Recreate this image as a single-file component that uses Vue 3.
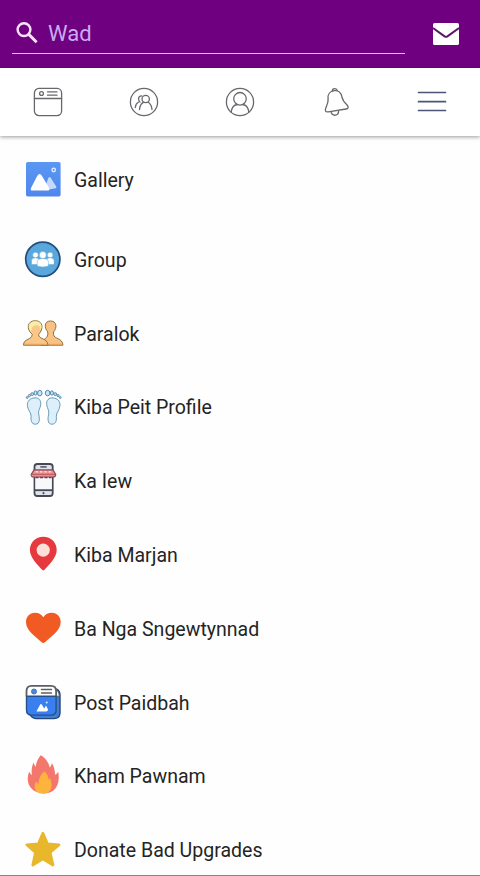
<script setup>
import { ref } from 'vue'

const query = ref('Wad')

const items = [
  { id: 'gallery', label: 'Gallery' },
  { id: 'group', label: 'Group' },
  { id: 'friends', label: 'Paralok' },
  { id: 'visits', label: 'Kiba Peit Profile' },
  { id: 'market', label: 'Ka Iew' },
  { id: 'nearby', label: 'Kiba Marjan' },
  { id: 'liked', label: 'Ba Nga Sngewtynnad' },
  { id: 'posts', label: 'Post Paidbah' },
  { id: 'popular', label: 'Kham Pawnam' },
  { id: 'donate', label: 'Donate Bad Upgrades' }
]
</script>

<template>
  <div class="screen">
    <header class="header">
      <div class="search">
        <svg class="search-icon" viewBox="0 0 22 22">
          <circle cx="8" cy="7.6" r="6.4" fill="none" stroke="#fbe3fb" stroke-width="2.4" />
          <path d="M12.8 12.4L20.6 20.2" stroke="#fbe3fb" stroke-width="2.9" />
        </svg>
        <span class="query">{{ query }}</span>
      </div>
      <svg class="mail" viewBox="0 0 26 22">
        <rect width="26" height="22" rx="1.6" fill="#fff" />
        <path d="M0 5L11.6 13.4Q13 14.3 14.4 13.4L26 5" fill="none" stroke="#5d1768" stroke-width="2" />
      </svg>
    </header>

    <nav class="tabs">
      <div class="tab">
        <svg viewBox="0 0 30 30">
          <rect x="1.4" y="1.4" width="27.2" height="27.2" rx="4.5" />
          <path d="M1.4 11.5H28.6M14.5 4.8H24M14.5 8.2H24" />
          <circle cx="8.5" cy="6.5" r="1.9" />
        </svg>
      </div>
      <div class="tab">
        <svg viewBox="0 0 30 30">
          <circle cx="15" cy="15" r="13.6" />
          <circle cx="16.7" cy="12" r="3.7" />
          <path d="M12.8 8.9Q9.4 9 9.6 12.2Q9.7 14 11 15M9.3 15.3Q6.7 16.7 6.3 20.5M14.4 15.4Q11.2 16.8 10.5 22.5M19.3 15.2Q22.6 17.5 23 22.5" />
        </svg>
      </div>
      <div class="tab">
        <svg viewBox="0 0 30 30">
          <circle cx="15" cy="15" r="13.6" />
          <circle cx="15" cy="11.8" r="6.3" />
          <path d="M6.2 25.3Q7 18.2 12.2 17.5M17.8 17.5Q23 18.2 23.8 25.3" />
        </svg>
      </div>
      <div class="tab">
        <svg viewBox="0 0 30 30">
          <path d="M11.3 3.9Q11.4 1.8 13.6 1.6Q15.9 1.5 16.3 3.7M10.2 25.4Q11.2 28.6 14.4 28.2Q17.5 27.6 17.6 24.5" />
          <path d="M13.2 3.6C17.3 3.1 20.2 5.8 20.9 9.8C21.7 13.8 23.5 15.6 26.1 18C28 20.1 27.2 21.7 25 22L7.3 24.8C4.7 25.3 3.7 23.6 4.8 20.9C6.3 17.5 7.6 15.5 7.1 11.5C6.6 7.5 8.9 4.2 13.2 3.6Z" />
        </svg>
      </div>
      <div class="tab">
        <svg class="menu" viewBox="0 0 30 30">
          <path d="M1.5 5.5H28.5M1.5 14.7H28.5M1.5 23.5H28.5" />
        </svg>
      </div>
    </nav>

    <main class="list">
      <div v-for="item in items" :key="item.id" class="row" :class="item.id">
        <svg class="icon" viewBox="0 0 40 40">
          <template v-if="item.id === 'gallery'">
            <defs>
              <linearGradient id="sky" x1="0" y1="0" x2="0" y2="1">
                <stop offset="0" stop-color="#5a98f2" />
                <stop offset="1" stop-color="#4f86ee" />
              </linearGradient>
            </defs>
            <rect x="3" y="2" width="34.6" height="34.6" rx="1.8" fill="url(#sky)" />
            <path d="M21 30.3L25.2 18.3Q26.6 16 28 18.2L33.2 26.5Q34 28.3 31.6 28.5Z" fill="#c5dafb" />
            <path d="M8 28L14.2 16Q16.7 12.1 19 16L26.3 28.3Q27 30.6 24.5 30.6H9.5Q7 30.6 8 28Z" fill="#fff" />
            <circle cx="30.7" cy="10" r="1.7" fill="#5a94f0" stroke="#d9e9ff" stroke-width="1.5" />
          </template>

          <template v-else-if="item.id === 'group'">
            <circle cx="19.8" cy="19.2" r="17.1" fill="#5aa7dc" stroke="#204f80" stroke-width="1.7" />
            <g fill="#fff" stroke="#5aa7dc" stroke-width=".5">
              <circle cx="12.5" cy="15" r="2.8" />
              <circle cx="27.1" cy="15" r="2.8" />
              <path d="M8.5 24.5V20.5Q8.7 17.7 12.5 17.7Q16 17.7 16.2 20.5V24.5ZM23.4 24.5V20.5Q23.6 17.7 27.1 17.7Q30.9 17.7 31.1 20.5V24.5Z" />
              <circle cx="19.8" cy="15" r="3.5" />
              <path d="M14.2 26V21.5Q14.5 18.5 19.8 18.5Q25.1 18.5 25.4 21.5V26Q19.8 28.2 14.2 26Z" />
            </g>
          </template>

          <g v-else-if="item.id === 'friends'" stroke="#8f7040" stroke-width="1" stroke-linejoin="round">
            <path d="M24.8 20.5V18C21.2 14 21 7 27.5 7C34 7 34.2 14 30.5 18V20.5C31 25.3 39.5 23.5 40 31.2H18C17.5 25.5 24.3 25.5 24.8 20.5Z" fill="#f8c382" />
            <path d="M9.2 20.3C3 15 4.2 6.7 12.3 6.7C20 6.7 21 15 15.6 20.3C15.8 26 24.5 23.5 25 31.2H.5C.5 24 9 26.5 9.2 20.3Z" fill="#fac788" />
            <path d="M8.2 18.2C3.8 13.5 5.6 7.5 12.3 7.3C18 7.3 20.2 12 17.3 16.5C17.2 12.5 16 10.8 13.5 11.2C10 11.5 8.4 13 8.2 18.2Z" fill="#faeea6" stroke="none" />
            <path d="M1 30.3H24.2M26 30.3H39.4" stroke="#e9a458" stroke-width="1.1" />
          </g>

          <g v-else-if="item.id === 'visits'" fill="#dceffb" stroke="#5d8fae" stroke-width=".9">
            <g v-for="side in [1, -1]" :key="side" :transform="side === 1 ? 'translate(0 .2)' : 'translate(41.4 .2) scale(-1 1)'">
              <path d="M11.3 9.7C15.7 9.2 18.2 12 17.7 16.5C17.3 20.5 14.7 22 15.8 26.5C16.7 30.3 17 35.8 12.6 36C8.2 36.2 7.7 31.5 8.1 28.5C8.5 24.5 4.6 22 4.4 17.2C4.2 12.8 7 10.1 11.3 9.7Z" />
              <g fill="#c4e4f7" stroke="#477fa4" stroke-width=".9">
                <ellipse cx="16.8" cy="4.9" rx="2.3" ry="2.8" />
                <ellipse cx="12.5" cy="4.8" rx="1.5" ry="2.2" />
                <circle cx="9.2" cy="5.9" r="1.4" />
                <circle cx="6.4" cy="7.4" r="1.1" />
                <circle cx="4.2" cy="9.3" r=".9" />
              </g>
            </g>
          </g>

          <g v-else-if="item.id === 'market'" stroke="#464855" stroke-width="1.8" stroke-linejoin="round">
            <rect x="11.5" y="3" width="18.2" height="32" rx="2.8" fill="#dfe3e9" />
            <path d="M12.4 16H28.8V28.5H12.4Z" fill="#f7f8fa" stroke="none" />
            <path d="M11.6 29.2H29.6" />
            <path d="M17.3 5.9H23.7" stroke-width="1.4" />
            <path d="M11 8.9H30L32.8 13.6Q32.4 16.2 29.7 16L10.8 16Q8.2 16.2 8.1 13.6Z" fill="#ef8f92" stroke="#7c4a58" stroke-width="1.1" />
            <path d="M12.8 10.8H28.5" stroke="#f8dede" stroke-width="1.6" stroke-dasharray="2 2.3" />
            <path d="M9 13.3H32" stroke="#b8505c" stroke-width="1" />
            <path d="M12.5 16.6H28.5" stroke="#6b3f50" stroke-width="1.3" stroke-dasharray="3 1.5" />
            <circle cx="20.5" cy="32.1" r=".7" fill="#464855" stroke-width="1" />
          </g>

          <template v-else-if="item.id === 'nearby'">
            <path d="M20.3 1.8C28 1.8 33.7 7.5 33.7 15C33.7 22.7 25.5 30.5 21.2 35.1Q20.3 35.9 19.4 35.1C15.1 30.5 6.9 22.7 6.9 15C6.9 7.5 12.6 1.8 20.3 1.8Z" fill="#e5393f" />
            <circle cx="20.2" cy="15.1" r="6.6" fill="#fce0d8" />
          </template>

          <path v-else-if="item.id === 'liked'" d="M20.3 8.3C22.3 5 25.3 3.7 28.7 3.7C34.3 3.7 37.8 8 37.7 13.3C37.5 22 27.5 27.8 22 33.3Q20.3 34.8 18.6 33.3C13.1 27.8 3.1 22 3 13.3C2.9 8 6.4 3.7 12 3.7C15.4 3.7 18.3 5 20.3 8.3Z" fill="#f15a22" />

          <template v-else-if="item.id === 'posts'">
            <path d="M30 5L34 6.3Q37 8 37 12V30Q36.7 35.6 31 35.6H13Q8.5 35.3 6.8 31Z" fill="#3f7ed5" stroke="#23477c" stroke-width="1.4" />
            <path d="M32 6.2Q36.3 8 36.3 13.3H32Z" fill="#f5f5f5" stroke="#5b5f66" />
            <rect x="3.5" y="2.8" width="29.6" height="29.3" rx="5" fill="#fff" />
            <path d="M3.5 13.3H33.1V27Q33.1 32.1 28 32.1H8.5Q3.5 32.1 3.5 27Z" fill="#397ff0" stroke="#284f87" stroke-width="1.4" />
            <path d="M3.5 13.3V8Q3.5 2.8 8.5 2.8H28Q33.1 2.8 33.1 8V13.3" fill="none" stroke="#5b5f66" stroke-width="1.8" />
            <circle cx="11" cy="8.5" r="2.5" fill="#4d87d7" stroke="#397ac3" />
            <path d="M18.5 6.6H28.5M18.5 10H28.5" stroke="#5b5f66" stroke-width="1.5" stroke-linecap="round" />
            <path d="M13.4 28.6L17.2 21.5Q18 20.7 18.8 21.5L21.2 25.4L23 22.5L25 26.6Q25 28.4 23 28.6Z" fill="#fff" />
            <circle cx="23.7" cy="19.5" r="1" fill="#dceaff" />
          </template>

          <template v-else-if="item.id === 'popular'">
            <path d="M17.7 -.8C22 1.5 25.3 5.5 26.8 11.5C28 10.2 28.6 8.8 28.8 7.1C31.3 11 31.7 14.5 32.2 18.8C33.6 18.1 34.7 16.8 35.2 15.8C36.8 24 35 30.8 30.5 34.5C24.5 38.9 14.8 38.2 9.5 33.6C4.4 29.1 3.5 22.5 6.3 15.5C7 17.2 7.7 18.2 8.9 19.1C8.2 13.9 8.8 10.3 10.7 6.2C11 8.3 11.6 9.4 12.8 10.7C13 6.3 15 2.8 17.7 -.8Z" fill="#f4776d" />
            <path d="M21.4 15.5C24.8 18.2 25.3 21 25.7 24C26.5 23.5 26.8 22.6 27 21.7C29.6 28.2 28.8 33.5 25.5 36.1C22.3 38.2 16.8 38.1 14.2 36C11 33.2 11.2 28.5 13.2 25.5C13.8 26.8 14.5 27.4 15.7 27.8C15.8 22.8 17.3 18.8 21.4 15.5Z" fill="#fdb43d" />
          </template>

          <path v-else d="M19.9 3.2L24.4 13.8L36 14.8L27.1 22.5L30 35L19.9 28.8L9.8 35L12.5 22.5L3.8 14.8L15.4 13.8Z" fill="#e9b72b" stroke="#e9b72b" stroke-width="2.8" stroke-linejoin="round" />
        </svg>
        <span class="label">{{ item.label }}</span>
      </div>
    </main>
  </div>
</template>

<style>
body {
  background: #fff;
  overflow: hidden;
}
</style>

<style scoped>
.screen {
  box-sizing: border-box;
  display: flex;
  flex-direction: column;
  height: 876px;
  overflow: hidden;
  border-bottom: 1px solid #858585;
  background: #fefefe;
  font-family: Roboto, sans-serif;
}

.header {
  display: flex;
  flex: none;
  justify-content: space-between;
  box-sizing: border-box;
  height: 67.5px;
  padding: 12px 21px 13px 12px;
  background: #6f0080;
}

.search {
  display: flex;
  align-items: center;
  box-sizing: border-box;
  width: 393px;
  height: 42px;
  padding-left: 4px;
  border-bottom: 1px solid #e6b9f0;
}

.search-icon {
  width: 22px;
  height: 22px;
  margin-right: 10px;
}

.query {
  padding-top: 2px;
  color: #c9abf3;
  font-size: 22px;
  line-height: 26px;
}

.mail {
  width: 26px;
  height: 22px;
  margin-top: 10.5px;
}

.tabs {
  display: grid;
  flex: none;
  grid-template-columns: repeat(5, 1fr);
  height: 68.5px;
  background: #fff;
  box-shadow: 0 1px 4px rgba(0, 0, 0, 0.4);
}

.tab {
  display: flex;
  align-items: center;
  justify-content: center;
}

.tab svg {
  width: 30px;
  height: 30px;
  fill: none;
  stroke: #66686b;
  stroke-width: 1.3;
  stroke-linecap: round;
}

.tab .menu {
  stroke: #4b5679;
  stroke-width: 1.7;
}

.list {
  display: flex;
  flex: none;
  flex-direction: column;
  padding-top: 7.3px;
}

.row {
  display: flex;
  flex: none;
  align-items: center;
  gap: 11px;
  height: 73.78px;
  padding-left: 23px;
}

.row.gallery {
  margin-bottom: 6.2px;
}

.icon {
  flex: none;
  width: 40px;
  height: 40px;
  overflow: visible;
}

.label {
  padding-top: 1.6px;
  color: #242424;
  font-size: 19.55px;
  line-height: 26px;
  white-space: nowrap;
}
</style>
